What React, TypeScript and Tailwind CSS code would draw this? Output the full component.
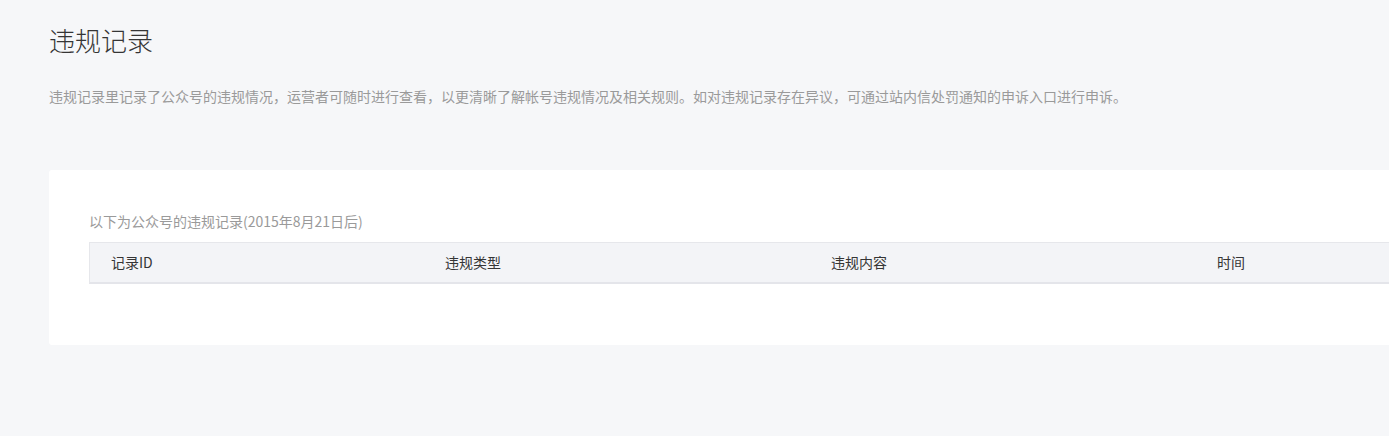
import React from "react";

export default function App() {
  const cols = ["记录ID", "违规类型", "违规内容", "时间"];
  return (
    <div
      className="w-full h-[436px] overflow-hidden bg-[#f6f7f9]"
      style={{ fontFamily: '"Noto Sans CJK SC", "Noto Sans", sans-serif' }}
    >
      <div className="pl-[49px] pt-[22px]">
        <h1 className="text-[26px] leading-[36px] text-[#353535] font-light">违规记录</h1>
        <p className="mt-[28px] text-[14px] leading-[20px] text-[#9a9a9a] whitespace-nowrap">
          违规记录里记录了公众号的违规情况，运营者可随时进行查看，以更清晰了解帐号违规情况及相关规则。如对违规记录存在异议，可通过站内信处罚通知的申诉入口进行申诉。
        </p>
        <div className="mt-[64px] w-[1420px] bg-white rounded-[3px] pt-[41px] pb-[61px] pl-[40px]">
          <div className="text-[14px] leading-[20px] text-[#9a9a9a] whitespace-nowrap">
            以下为公众号的违规记录(2015年8月21日后)
          </div>
          <div className="mt-[11px] grid grid-cols-[334px_386px_386px_386px] h-[42px] bg-[#f3f4f7] border-t border-l border-[#e6e7eb] border-b-2 border-b-[#e4e5ea] items-center">
            {cols.map((c) => (
              <div key={c} className="pl-[21px] text-[14px] text-[#353535] whitespace-nowrap">
                {c}
              </div>
            ))}
          </div>
        </div>
      </div>
    </div>
  );
}
